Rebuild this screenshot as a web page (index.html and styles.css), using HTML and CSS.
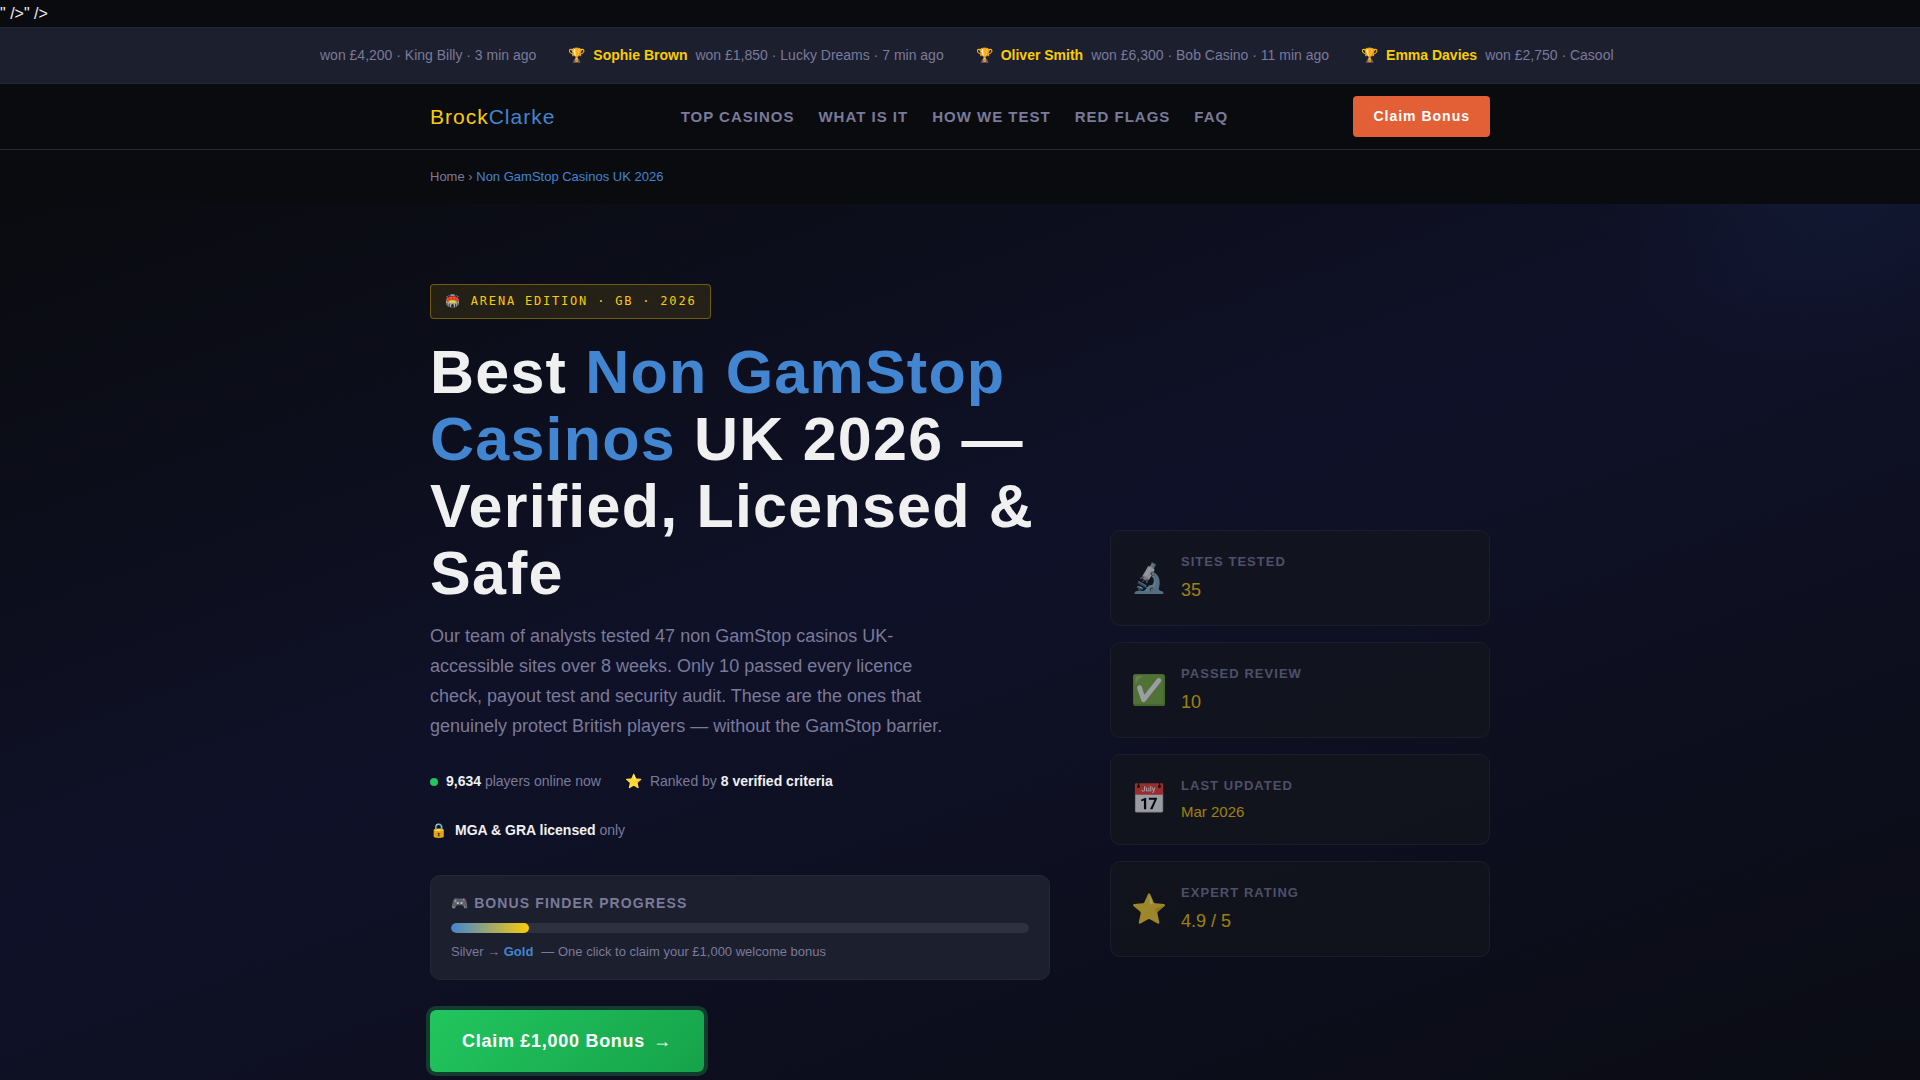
FILE: index.html
```html
<!DOCTYPE html>
<html lang="en-GB">
<head>
    <meta charset="UTF-8">
    <meta name="viewport" content="width=device-width, initial-scale=1.0">
    <title>Best Non GamStop Casinos UK 2026</title>
    <link rel="stylesheet" href="styles.css">
</head>
<body>
    <div class="top-text">" /&gt;" /&gt;</div>

    <!-- Winners ticker -->
    <div class="ticker">
        <div class="ticker-track">
            <div class="ticker-item"><span>won £4,200 · King Billy · 3 min ago</span></div>
            <div class="ticker-item"><span>🏆</span><strong>Sophie Brown</strong><span>won £1,850 · Lucky Dreams · 7 min ago</span></div>
            <div class="ticker-item"><span>🏆</span><strong>Oliver Smith</strong><span>won £6,300 · Bob Casino · 11 min ago</span></div>
            <div class="ticker-item"><span>🏆</span><strong>Emma Davies</strong><span>won £2,750 · Casool</span></div>
        </div>
    </div>

    <header class="header">
        <div class="container header-inner">
            <a href="#" class="logo">Brock<span>Clarke</span></a>
            <nav class="nav">
                <a href="#casinos">Top Casinos</a>
                <a href="#what">What Is It</a>
                <a href="#test">How We Test</a>
                <a href="#flags">Red Flags</a>
                <a href="#faq">FAQ</a>
            </nav>
            <a href="#claim" class="header-btn">Claim Bonus</a>
        </div>
    </header>

    <div class="breadcrumb">
        <div class="container"><a href="#">Home</a> › <span>Non GamStop Casinos UK 2026</span></div>
    </div>

    <!-- Hero -->
    <section class="hero">
        <div class="container hero-grid">
            <div class="hero-main">
                <div class="badge">🏟️ ARENA EDITION · GB · 2026</div>
                <h1>Best <span>Non GamStop Casinos</span> UK 2026 — Verified, Licensed &amp; Safe</h1>
                <p class="hero-text">Our team of analysts tested 47 non GamStop casinos UK-accessible sites over 8 weeks. Only 10 passed every licence check, payout test and security audit. These are the ones that genuinely protect British players — without the GamStop barrier.</p>

                <div class="trust">
                    <div class="trust-item"><span class="dot"></span><span><strong>9,634</strong> players online now</span></div>
                    <div class="trust-item"><span>⭐</span><span>Ranked by <strong>8 verified criteria</strong></span></div>
                    <div class="trust-item"><span>🔒</span><span><strong>MGA &amp; GRA licensed</strong> only</span></div>
                </div>

                <div class="progress-card">
                    <div class="progress-title">🎮 Bonus Finder Progress</div>
                    <div class="progress-bar"><div class="progress-fill"></div></div>
                    <div class="progress-note"><span>Silver → <strong>Gold</strong></span><span>— One click to claim your £1,000 welcome bonus</span></div>
                </div>

                <a href="#claim" class="cta">Claim £1,000 Bonus <span>→</span></a>
            </div>

            <div class="stats">
                <div class="stat">
                    <div class="stat-icon">🔬</div>
                    <div>
                        <div class="stat-label">Sites Tested</div>
                        <div class="stat-value">35</div>
                    </div>
                </div>
                <div class="stat">
                    <div class="stat-icon">✅</div>
                    <div>
                        <div class="stat-label">Passed Review</div>
                        <div class="stat-value">10</div>
                    </div>
                </div>
                <div class="stat">
                    <div class="stat-icon">📅</div>
                    <div>
                        <div class="stat-label">Last Updated</div>
                        <div class="stat-value small">Mar 2026</div>
                    </div>
                </div>
                <div class="stat">
                    <div class="stat-icon">⭐</div>
                    <div>
                        <div class="stat-label">Expert Rating</div>
                        <div class="stat-value">4.9 / 5</div>
                    </div>
                </div>
            </div>
        </div>
    </section>
</body>
</html>
```
FILE: styles.css
```css
:root {
    --bg: #0a0b0f;
    --card: #1c1f2e;
    --border: #252736;
    --text: #f0f0f0;
    --muted: #7a7a9a;
    --blue: #4285d0;
    --gold: #facc05;
}

* { margin: 0; padding: 0; box-sizing: border-box; }

body {
    background: var(--bg);
    color: var(--text);
    font-family: "Liberation Sans", Arial, sans-serif;
    font-size: 16px;
    line-height: 27px;
    overflow-x: hidden;
}

a { color: inherit; text-decoration: none; }

.container { max-width: 1100px; margin: 0 auto; padding: 0 20px; }

/* Ticker */
.ticker {
    background: var(--card);
    border-top: 1px solid var(--border);
    border-bottom: 1px solid var(--border);
    padding: 16px 0;
    overflow: hidden;
}
.ticker-track {
    display: flex;
    gap: 32px;
    max-width: 1280px;
    margin: 0 auto;
    white-space: nowrap;
    font-size: 14px;
    line-height: 23px;
    color: var(--muted);
}
.ticker-item { display: flex; gap: 8px; flex-shrink: 0; }
.ticker-item strong { color: var(--gold); }

/* Header */
.header { border-bottom: 1px solid var(--border); padding: 12px 0; }
.header-inner { display: flex; align-items: center; justify-content: space-between; }
.logo { font-size: 21px; letter-spacing: 1px; color: var(--gold); }
.logo span { color: var(--blue); }
.nav { display: flex; gap: 24px; }
.nav a {
    font-size: 15px;
    font-weight: 700;
    letter-spacing: 1px;
    text-transform: uppercase;
    color: var(--muted);
}
.header-btn {
    background: #e35f35;
    color: #fff;
    font-size: 14px;
    font-weight: 700;
    line-height: 25px;
    letter-spacing: 1px;
    padding: 8px 20px;
    border-radius: 4px;
}

.breadcrumb { padding: 16px 0; font-size: 13px; line-height: 22px; color: var(--muted); }
.breadcrumb span { color: var(--blue); }

/* Hero */
.hero {
    padding: 80px 0;
    background:
        radial-gradient(circle at 95% -60px, rgba(66, 133, 208, 0.08), transparent 240px),
        linear-gradient(160deg, #0a0b0f 0%, #0f1128 40%, #0a0b0f 100%);
}
.hero-grid {
    display: grid;
    grid-template-columns: 1fr 380px;
    gap: 60px;
    min-height: 85vh;
}
.badge {
    width: fit-content;
    margin-bottom: 20px;
    padding: 6px 14px;
    border: 1px solid rgba(255, 204, 0, 0.35);
    border-radius: 4px;
    background: rgba(255, 204, 0, 0.1);
    color: var(--gold);
    font-family: "DejaVu Sans Mono", monospace;
    font-size: 12px;
    line-height: 21px;
    letter-spacing: 0.15em;
}
h1 {
    font-size: 61px;
    line-height: 67px;
    letter-spacing: 0.02em;
    margin-bottom: 14px;
}
h1 span { color: var(--blue); }
.hero-text {
    max-width: 520px;
    margin-bottom: 28px;
    font-size: 18px;
    line-height: 30px;
    color: var(--muted);
}

.trust { display: flex; flex-wrap: wrap; gap: 24px; margin-bottom: 32px; }
.trust-item {
    display: flex;
    align-items: center;
    gap: 8px;
    font-size: 14px;
    line-height: 25px;
    color: var(--muted);
}
.trust-item strong { color: var(--text); }
.dot { width: 8px; height: 8px; border-radius: 50%; background: #22c55e; }

.progress-card {
    margin-bottom: 30px;
    padding: 16px 20px;
    background: var(--card);
    border: 1px solid var(--border);
    border-radius: 10px;
    font-size: 13px;
    line-height: 22px;
    color: var(--muted);
}
.progress-title {
    margin-bottom: 8px;
    font-size: 14px;
    font-weight: 700;
    line-height: 23px;
    letter-spacing: 0.08em;
    text-transform: uppercase;
}
.progress-bar { height: 10px; margin-bottom: 8px; border-radius: 5px; background: #2e313e; overflow: hidden; }
.progress-fill { width: 13.5%; height: 100%; border-radius: 5px; background: linear-gradient(90deg, var(--blue), var(--gold)); }
.progress-note { display: flex; gap: 8px; }
.progress-note strong { color: var(--blue); }

.cta {
    display: inline-flex;
    gap: 8px;
    padding: 16px 32px;
    border-radius: 6px;
    background: linear-gradient(135deg, #22c55e, #16a34a);
    box-shadow: 0 0 0 4px rgba(34, 197, 94, 0.25);
    color: #fff;
    font-size: 18px;
    font-weight: 700;
    line-height: 30px;
    letter-spacing: 0.04em;
}

/* Stat cards */
.stats { display: flex; flex-direction: column; gap: 16px; align-self: center; }
.stat {
    display: flex;
    align-items: center;
    gap: 14px;
    padding: 20px;
    background: #14161c;
    border: 1px solid var(--border);
    border-radius: 10px;
    opacity: 0.6;
}
.stat-icon { font-size: 29px; line-height: 48px; }
.stat-label {
    margin-bottom: 2px;
    font-size: 13px;
    font-weight: 700;
    line-height: 22px;
    letter-spacing: 0.08em;
    text-transform: uppercase;
    color: var(--muted);
}
.stat-value { font-size: 18px; line-height: 30px; color: var(--gold); }
.stat-value.small { font-size: 15px; line-height: 25px; }

@media (max-width: 900px) {
    .hero-grid { grid-template-columns: 1fr; }
    .nav { display: none; }
}
```
